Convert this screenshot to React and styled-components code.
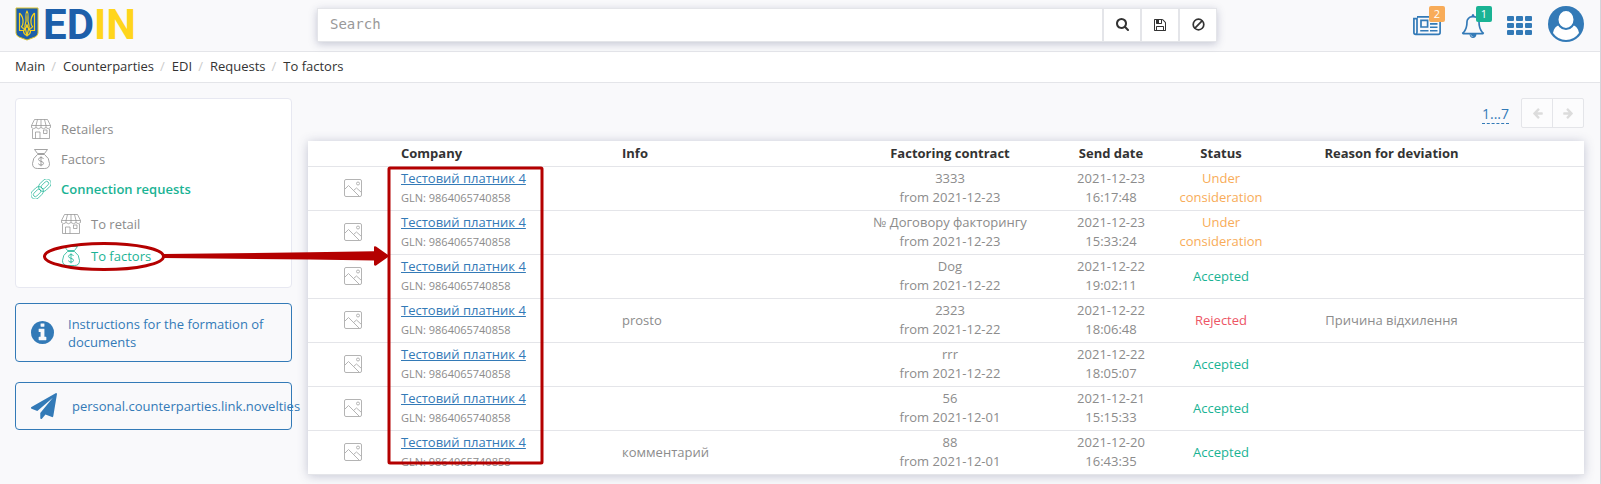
import React from "react";
import styled, { createGlobalStyle, css } from "styled-components";

const blue = "#337ab7";
const green = "#1ab394";
const orange = "#f8ac59";
const red = "#ed5565";
const grey = "#8c8c8c";
const line = "#e4e5e9";
const markRed = "#b40000";

const GlobalStyle = createGlobalStyle`
  *, *::before, *::after { box-sizing: border-box; }
  body {
    margin: 0;
    background: #f9f9fb;
    color: #333;
    font-family: "Open Sans", "Noto Sans", sans-serif;
    font-size: 13px;
    line-height: 18px;
  }
  a { color: inherit; text-decoration: none; }
  button { font: inherit; cursor: pointer; }
  ul, ol { list-style: none; margin: 0; padding: 0; }
`;

const Page = styled.div`
  position: relative;
  min-height: 100vh;
  border-right: 1px solid #d3d4da;
  overflow: hidden;
`;

const Header = styled.header`
  display: flex;
  align-items: center;
  height: 52px;
  padding: 0 16px 3px 15px;
  border-bottom: 1px solid ${line};
`;

const Logo = styled.a`
  display: flex;
  align-items: center;
  flex: 0 0 302px;
  gap: 4px;
`;

const Wordmark = styled.span`
  display: flex;
  padding-top: 2px;
  color: #1d5faa;
  font-family: "Liberation Sans Narrow", Roboto, sans-serif;
  font-weight: 700;
  font-size: 42px;
  line-height: 46px;
`;

const WordmarkAccent = styled.span`
  color: #ffd51c;
`;

const SearchBar = styled.form`
  display: flex;
  flex: 0 1 900px;
  height: 34px;
  margin-top: 1px;
  border: 1px solid ${line};
  background: #fff;
  box-shadow: 0 2px 8px rgba(60, 70, 110, 0.28);
`;

const SearchInput = styled.input`
  flex: 1;
  min-width: 0;
  padding: 0 12px 2px;
  border: 0;
  background: transparent;
  color: #333;
  font-family: "DejaVu Sans Mono", monospace;
  font-size: 14px;
  outline: none;
  &::placeholder { color: #999; opacity: 1; }
`;

const SearchButton = styled.button`
  display: flex;
  align-items: center;
  justify-content: center;
  width: 38px;
  padding: 0;
  border: 0;
  border-left: 2px solid ${line};
  background: #fff;
  color: #333;
`;

const Tools = styled.nav`
  display: flex;
  align-items: center;
  gap: 16px;
  margin-left: auto;
  color: ${blue};
`;

const ToolLink = styled.a`
  position: relative;
  display: flex;
  align-items: center;
  height: 36px;
  ${(p) => p.$notify && css`width: 31px;`}
  ${(p) => !p.$flush && css`padding-top: 3px;`}
`;

const Badge = styled.span`
  position: absolute;
  top: 0;
  right: -1px;
  width: 16px;
  height: 16px;
  border-radius: 2px;
  background: ${(p) => p.$color};
  color: #fff;
  font-size: 11px;
  line-height: 16px;
  text-align: center;
`;

const Breadcrumbs = styled.ol`
  display: flex;
  height: 31px;
  padding: 5px 15px;
  border-bottom: 1px solid ${line};
  background: #fff;
`;

const Crumb = styled.li`
  & + &::before {
    content: "/";
    padding: 0 7px 0 6px;
    color: #ccc;
  }
`;

const Body = styled.div`
  display: flex;
  gap: 16px;
  padding: 15px 16px 9px 15px;
`;

const Sidebar = styled.aside`
  flex: 0 0 277px;
  min-width: 0;
`;

const Menu = styled.ul`
  padding: 15px;
  border: 1px solid #e7e8f1;
  border-radius: 4px;
  background: #fff;
`;

const SubMenu = styled.ul`
  margin-top: 4px;
  padding-left: 30px;
`;

const MenuLink = styled.a`
  display: flex;
  align-items: center;
  gap: 10px;
  height: ${(p) => (p.$sub ? "32px" : "30px")};
  color: ${grey};
  ${(p) => p.$active && css`color: ${green};`}
  ${(p) => p.$bold && css`font-weight: 600;`}
`;

const Notice = styled.a`
  display: flex;
  align-items: center;
  gap: ${(p) => (p.$compact ? "15px" : "14px")};
  min-height: ${(p) => (p.$compact ? "48px" : "59px")};
  margin-top: ${(p) => (p.$compact ? "20px" : "15px")};
  padding: 10px 15px;
  border: 1px solid ${blue};
  border-radius: 4px;
  color: ${blue};
  svg { flex: none; }
`;

const Main = styled.main`
  flex: 1;
  min-width: 0;
`;

const Pager = styled.div`
  display: flex;
  justify-content: flex-end;
  align-items: center;
  gap: 12px;
  height: 30px;
  margin-bottom: 13px;
`;

const PageRange = styled.a`
  padding-top: 2px;
  border-bottom: 1px dashed ${blue};
  color: ${blue};
  font-size: 14px;
  line-height: 18px;
`;

const PagerButtons = styled.div`
  display: flex;
  height: 30px;
  border: 1px solid ${line};
  border-radius: 2px;
  background: #fcfcfd;
`;

const PagerButton = styled.button`
  display: flex;
  align-items: center;
  justify-content: center;
  box-sizing: content-box;
  width: 30px;
  padding: 0;
  border: 0;
  background: transparent;
  color: #dcdcdc;
  & + & {
    border-left: 1px solid ${line};
    svg { transform: scaleX(-1); }
  }
`;

const Table = styled.table`
  width: 100%;
  table-layout: fixed;
  border-collapse: separate;
  border-spacing: 0;
  background: #fff;
  box-shadow: 0 1px 10px rgba(60, 70, 110, 0.28);
`;

const HeadCell = styled.th`
  height: 26px;
  padding: 0 4px;
  border-bottom: 1px solid ${line};
  color: #333;
  font-weight: 700;
  line-height: 19px;
  text-align: ${(p) => p.$align || "center"};
`;

const Cell = styled.td`
  height: 44px;
  padding: 2px 4px 3px;
  border-bottom: 1px solid ${line};
  color: ${(p) => p.$color || grey};
  line-height: 19px;
  text-align: ${(p) => p.$align || "center"};
  vertical-align: middle;
  svg { display: block; margin: 0 auto; }
`;

const CompanyLink = styled.a`
  color: ${blue};
  text-decoration: underline;
`;

const Gln = styled.div`
  font-size: 11px;
`;

const Annotation = styled.svg`
  position: absolute;
  top: 0;
  left: 0;
  pointer-events: none;
`;

const Glyph = ({ width, height, box, d }) => (
  <svg width={width} height={height} viewBox={box} fill="currentColor" aria-hidden="true">
    <path d={d} />
  </svg>
);

const paths = {
  bell: "M912 1696q0-16-16-16-59 0-101.5-42.5t-42.5-101.5q0-16-16-16t-16 16q0 73 51.5 124.5t124.5 51.5q16 0 16-16zm-666-288h1300q-266-300-266-832 0-51-24-105t-69-103-121.5-80.5-169.5-31.5-169.5 31.5-121.5 80.5-69 103-24 105q0 532-266 832zm1482 0q0 52-38 90t-90 38h-448q0 106-75 181t-181 75-181-75-75-181h-448q-52 0-90-38t-38-90q50-42 91-88t85-119.5 74.5-158.5 50-206 19.5-260q0-152 117-282.5t307-158.5q-8-19-8-39 0-40 28-68t68-28 68 28 28 68q0 20-8 39 190 28 307 158.5t117 282.5q0 139 19.5 260t50 206 74.5 158.5 85 119.5 91 88z",
  search: "M1216 832q0-185-131.5-316.5t-316.5-131.5-316.5 131.5-131.5 316.5 131.5 316.5 316.5 131.5 316.5-131.5 131.5-316.5zm512 832q0 52-38 90t-90 38q-54 0-90-38l-343-342q-179 124-399 124-143 0-273.5-55.5t-225-150-150-225-55.5-273.5 55.5-273.5 150-225 225-150 273.5-55.5 273.5 55.5 225 150 150 225 55.5 273.5q0 220-124 399l343 343q37 37 37 90z",
  save: "M512 1536h768v-384h-768v384zm896 0h128v-896q0-14-10-38.5t-20-34.5l-281-281q-10-10-34-20t-39-10v416q0 40-28 68t-68 28h-576q-40 0-68-28t-28-68v-416h-128v1280h128v-416q0-40 28-68t68-28h832q40 0 68 28t28 68v416zm-384-928v-320q0-13-9.5-22.5t-22.5-9.5h-192q-13 0-22.5 9.5t-9.5 22.5v320q0 13 9.5 22.5t22.5 9.5h192q13 0 22.5-9.5t9.5-22.5zm640 32v928q0 40-28 68t-68 28h-1344q-40 0-68-28t-28-68v-1344q0-40 28-68t68-28h928q40 0 88 20t76 48l280 280q28 28 48 76t20 88z",
  info: "M1152 1376v-160q0-14-9-23t-23-9h-96v-512q0-14-9-23t-23-9h-320q-14 0-23 9t-9 23v160q0 14 9 23t23 9h96v320h-96q-14 0-23 9t-9 23v160q0 14 9 23t23 9h448q14 0 23-9t9-23zm-128-896v-160q0-14-9-23t-23-9h-192q-14 0-23 9t-9 23v160q0 14 9 23t23 9h192q14 0 23-9t9-23zm640 416q0 209-103 385.5t-279.5 279.5-385.5 103-385.5-103-279.5-279.5-103-385.5 103-385.5 279.5-279.5 385.5-103 385.5 103 279.5 279.5 103 385.5z",
  plane: "M1764 11q33 24 27 64l-256 1536q-5 29-32 45-14 8-31 8-11 0-24-5l-453-185-242 295q-18 23-49 23-13 0-22-4-19-7-30.5-23.5t-11.5-36.5v-349l864-1059-1069 925-395-162q-37-14-40-55-2-40 32-59l1664-960q15-9 32-9 20 0 36 11z",
  arrow: "M1664 896v128q0 53-32.5 90.5t-84.5 37.5h-704l293 294q38 36 38 90t-38 90l-75 76q-37 37-90 37-52 0-91-37l-651-652q-37-37-37-90 0-52 37-91l651-650q38-38 91-38 52 0 90 38l75 74q38 38 38 91t-38 91l-293 293h704q52 0 84.5 37.5t32.500 90.5z",
};

const Shield = () => (
  <svg width="24" height="34" viewBox="0 0 24 34" fill="none" aria-hidden="true">
    <path d="M1 1h22v25q0 2.500-3 4l-8 3-8-3q-3-1.500-3-4z" fill="#1d5faa" stroke="#d9c22e" />
    <g stroke="#f6d21c" strokeWidth="1.200" strokeLinejoin="round">
      <path d="M4.500 6v17.500h5M19.500 6v17.500h-5" />
      <path d="M4.500 6q4 4 3.500 9.500 0 2.500-1.500 4 .5 2 3 2M19.500 6q-4 4-3.500 9.500 0 2.500 1.500 4-.5 2-3 2" />
      <path d="M12 4q-1.500 2-1 6 .5 4-.8 7.500-1 3 .5 5.500L12 29l1.300-6q1.500-2.500.5-5.500-1.300-3.500-.8-7.500.5-4-1-6z" />
      <path d="M8.500 23.500q0 4 3.500 5 3.500-1 3.500-5M8.500 23.500q3.500-3 3.500-6 0 3 3.500 6" />
    </g>
  </svg>
);

const NewsIcon = () => (
  <svg width="28" height="20" viewBox="0 0 28 20" fill="none" stroke="currentColor" aria-hidden="true">
    <path strokeWidth="1.700" d="M4 .9h23.100v15.600q0 1.800-1.800 1.800H2.700q-1.800 0-1.800-1.800V2.700H4v13.600q0 1.800-1.300 2" />
    <path strokeWidth="1.700" d="M8 4.400h6.600v6.600H8z" />
    <path strokeWidth="1.600" d="M17 4.400h7.500M17 7.900h7.500M17 11.300h7.500M7.200 14.700h8.300M17 14.700h7.500" />
  </svg>
);

const BanIcon = () => (
  <svg width="13" height="13" viewBox="0 0 13 13" fill="none" stroke="currentColor" strokeWidth="1.700" aria-hidden="true">
    <circle cx="6.500" cy="6.500" r="5.300" />
    <path d="M2.700 10.300l7.600-7.600" />
  </svg>
);

const GridIcon = () => (
  <svg width="25" height="19" viewBox="0 0 25 19" fill="currentColor" aria-hidden="true">
    {[0, 7, 14].map((y) =>
      [0, 9, 18].map((x) => <rect key={`${x}-${y}`} x={x} y={y} width="7" height="5" rx="1" />)
    )}
  </svg>
);

const AvatarIcon = () => (
  <svg width="36" height="36" viewBox="0 0 36 36" aria-hidden="true">
    <circle cx="18" cy="18" r="18" fill="currentColor" />
    <path d="M5 27q1-6.500 6.500-8h13q5.500 1.500 6.500 8-5 7-13 7T5 27z" fill="#fff" />
    <ellipse cx="18" cy="13.500" rx="8.500" ry="9.500" fill="#fff" stroke="currentColor" strokeWidth="2" />
  </svg>
);

const ShopIcon = () => (
  <svg width="20" height="20" viewBox="0 0 20 20" fill="none" stroke="currentColor" strokeWidth="0.700" aria-hidden="true">
    <path d="M3.500 .5h13L19.500 6.500H.5zM6.500.5l-1.500 6M10 .5v6M13.500.5l1.500 6M.5 6.500v2q2.200 2.500 4.500 0 2.500 2.500 5 0 2.500 2.500 5 0 2.300 2.500 4.500 0v-2M5 6.500v2M10 6.500v2M15 6.500v2M1.500 10v9.500h17V10M4.500 19.500v-6.500h4.500v6.500M12.500 11h3.500v3.500h-3.500z" />
  </svg>
);

const BagIcon = () => (
  <svg width="20" height="20" viewBox="0 0 20 20" fill="none" stroke="currentColor" strokeWidth="0.800" aria-hidden="true">
    <path d="M6.500 4.500L3.500.500h13L13.500 4.500zM6.500 5.500h7M6.500 5.500Q1.500 9 1.500 14.500 1.500 19.500 6.500 19.500h7q5 0 5-5 0-5.500-5-9" />
    <path d="M12.500 10q-.5-1.500-2.500-1.500T7.500 10.300q0 1.500 2.500 2t2.500 2q0 1.800-2.500 1.800T7.500 14.500M10 7.300v10" />
  </svg>
);

const ChainIcon = () => (
  <svg width="20" height="20" viewBox="0 0 20 20" fill="none" stroke="currentColor" strokeWidth="0.700" aria-hidden="true">
    <g transform="rotate(-45 10 10)">
      <rect x="-2.500" y="5.500" width="14" height="9" rx="4.500" />
      <rect x="0" y="8" width="9" height="4" rx="2" />
      <rect x="8.500" y="5.500" width="14" height="9" rx="4.500" />
      <rect x="11" y="8" width="9" height="4" rx="2" />
    </g>
  </svg>
);

const PictureIcon = () => (
  <svg width="18" height="18" viewBox="0 0 18 18" fill="none" stroke="#b4b4b4" strokeWidth="1" aria-hidden="true">
    <rect x=".5" y=".5" width="17" height="17" rx="1.500" />
    <circle cx="14" cy="4.500" r="1.500" />
    <path d="M.5 10.500L4.500 6.500l11 11M9.500 11.500l3-2.500 5 4.500" />
  </svg>
);

const statusColor = { "Under consideration": orange, Accepted: green, Rejected: red };

const requests = [
  { contract: "3333", from: "2021-12-23", date: "2021-12-23", time: "16:17:48", status: "Under consideration" },
  { contract: "№ Договору факторингу", from: "2021-12-23", date: "2021-12-23", time: "15:33:24", status: "Under consideration" },
  { contract: "Dog", from: "2021-12-22", date: "2021-12-22", time: "19:02:11", status: "Accepted" },
  { info: "prosto", contract: "2323", from: "2021-12-22", date: "2021-12-22", time: "18:06:48", status: "Rejected", reason: "Причина відхилення" },
  { contract: "rrr", from: "2021-12-22", date: "2021-12-22", time: "18:05:07", status: "Accepted" },
  { contract: "56", from: "2021-12-01", date: "2021-12-21", time: "15:15:33", status: "Accepted" },
  { info: "комментарий", contract: "88", from: "2021-12-01", date: "2021-12-20", time: "16:43:35", status: "Accepted" },
];

const columnWidths = [89, 221, 229, 206, 116, 104, 237, 74];

const RequestRow = ({ item }) => (
  <tr>
    <Cell><PictureIcon /></Cell>
    <Cell $align="left">
      <CompanyLink href="#company">Тестовий платник 4</CompanyLink>
      <Gln>GLN: 9864065740858</Gln>
    </Cell>
    <Cell $align="left">{item.info}</Cell>
    <Cell>{item.contract}<br />from {item.from}</Cell>
    <Cell>{item.date}<br />{item.time}</Cell>
    <Cell $color={statusColor[item.status]}>{item.status}</Cell>
    <Cell>{item.reason}</Cell>
    <Cell />
  </tr>
);

export default function App() {
  return (
    <Page>
      <GlobalStyle />
      <Header>
        <Logo href="#home">
          <Shield />
          <Wordmark>ED<WordmarkAccent>IN</WordmarkAccent></Wordmark>
        </Logo>
        <SearchBar role="search">
          <SearchInput type="text" placeholder="Search" aria-label="Search" />
          <SearchButton type="button" aria-label="Find">
            <Glyph width={13} height={13} box="64 128 1664 1664" d={paths.search} />
          </SearchButton>
          <SearchButton type="button" aria-label="Save search">
            <Glyph width={12} height={12} box="128 128 1536 1536" d={paths.save} />
          </SearchButton>
          <SearchButton type="button" aria-label="Clear search"><BanIcon /></SearchButton>
        </SearchBar>
        <Tools aria-label="Account">
          <ToolLink href="#news" aria-label="News" $notify>
            <NewsIcon />
            <Badge $color={orange}>2</Badge>
          </ToolLink>
          <ToolLink href="#alerts" aria-label="Notifications" $notify>
            <Glyph width={26} height={24} box="0 0 1792 1792" d={paths.bell} />
            <Badge $color={green}>1</Badge>
          </ToolLink>
          <ToolLink href="#apps" aria-label="Apps"><GridIcon /></ToolLink>
          <ToolLink href="#profile" aria-label="Profile" $flush><AvatarIcon /></ToolLink>
        </Tools>
      </Header>

      <nav aria-label="Breadcrumb">
        <Breadcrumbs>
          {["Main", "Counterparties", "EDI", "Requests", "To factors"].map((name) => (
            <Crumb key={name}><a href="#path">{name}</a></Crumb>
          ))}
        </Breadcrumbs>
      </nav>

      <Body>
        <Sidebar>
          <Menu>
            <li><MenuLink href="#retailers"><ShopIcon />Retailers</MenuLink></li>
            <li><MenuLink href="#factors"><BagIcon />Factors</MenuLink></li>
            <li>
              <MenuLink href="#requests" $active $bold><ChainIcon />Connection requests</MenuLink>
              <SubMenu>
                <li><MenuLink href="#to-retail" $sub><ShopIcon />To retail</MenuLink></li>
                <li><MenuLink href="#to-factors" $sub $active><BagIcon />To factors</MenuLink></li>
              </SubMenu>
            </li>
          </Menu>
          <Notice href="#instructions">
            <Glyph width={23} height={23} box="128 128 1536 1536" d={paths.info} />
            Instructions for the formation of documents
          </Notice>
          <Notice href="#novelties" $compact>
            <Glyph width={26} height={26} box="0 0 1792 1792" d={paths.plane} />
            personal.counterparties.link.novelties
          </Notice>
        </Sidebar>

        <Main>
          <Pager>
            <PageRange href="#range">1...7</PageRange>
            <PagerButtons>
              <PagerButton type="button" aria-label="Previous page">
                <Glyph width={11} height={11} box="64 128 1600 1664" d={paths.arrow} />
              </PagerButton>
              <PagerButton type="button" aria-label="Next page">
                <Glyph width={11} height={11} box="64 128 1600 1664" d={paths.arrow} />
              </PagerButton>
            </PagerButtons>
          </Pager>
          <Table>
            <colgroup>
              {columnWidths.map((width, i) => <col key={i} width={width} />)}
            </colgroup>
            <thead>
              <tr>
                <HeadCell />
                <HeadCell $align="left">Company</HeadCell>
                <HeadCell $align="left">Info</HeadCell>
                <HeadCell>Factoring contract</HeadCell>
                <HeadCell>Send date</HeadCell>
                <HeadCell>Status</HeadCell>
                <HeadCell>Reason for deviation</HeadCell>
                <HeadCell />
              </tr>
            </thead>
            <tbody>
              {requests.map((item) => <RequestRow key={item.time} item={item} />)}
            </tbody>
          </Table>
        </Main>
      </Body>

      <Annotation width="560" height="484" viewBox="0 0 560 484" fill="none" aria-hidden="true">
        <ellipse cx="104" cy="256.500" rx="59.500" ry="13" stroke={markRed} strokeWidth="3" />
        <path d="M163 254L310 252.300 374 251.300V247q0-1 2-.5L389.500 256 376 265.500q-2 .5-2-1V260.500L310 259.500 163 258z" fill={markRed} />
        <rect x="389" y="168" width="153" height="295" rx="1" stroke={markRed} strokeWidth="3" />
      </Annotation>
    </Page>
  );
}
